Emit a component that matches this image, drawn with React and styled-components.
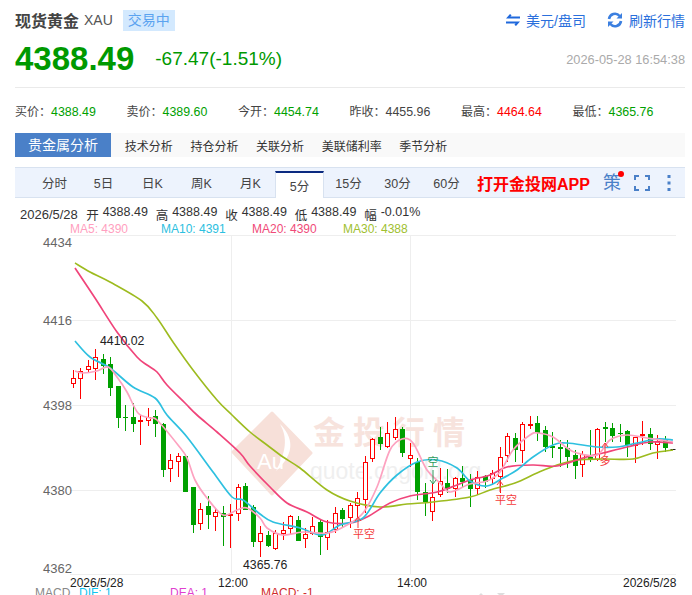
import React from 'react';
import styled, { createGlobalStyle } from 'styled-components';

const GlobalStyle = createGlobalStyle`
  html, body {
    margin: 0;
    padding: 0;
    height: 595px;
    overflow: hidden;
    background: #fff;
    font-family: "Liberation Sans", "Noto Sans CJK SC", sans-serif;
  }
`;

const Page = styled.div`
  width: 692px;
  height: 595px;
  overflow: hidden;
`;

const Head = styled.header`
  box-sizing: border-box;
  height: 88px;
  margin: 0 7px 0 15px;
  border-bottom: 1px solid #eaeaea;
`;

const TitleRow = styled.div`
  display: flex;
  align-items: center;
  height: 40px;
`;

const Title = styled.h1`
  margin: 0;
  font-size: 16px;
  font-weight: 700;
  color: #444;
`;

const Code = styled.span`
  margin-left: 5px;
  font-size: 14px;
  color: #555;
`;

const Badge = styled.span`
  margin-left: 10px;
  padding: 0 5px;
  height: 21px;
  line-height: 21px;
  font-size: 14px;
  color: #5ba3f0;
  background: #d3e9fe;
`;

const Actions = styled.div`
  display: flex;
  align-items: center;
  margin-left: auto;
`;

const Action = styled.a`
  display: flex;
  align-items: center;
  gap: ${({ $gap }) => $gap}px;
  margin-left: ${({ $offset }) => $offset || 0}px;
  font-size: 14px;
  color: #2a6fdc;
`;

const PriceRow = styled.div`
  display: flex;
  align-items: center;
  height: 38px;
`;

const Price = styled.strong`
  font-size: 33px;
  font-weight: 700;
  color: #009900;
`;

const Change = styled.span`
  margin-left: 21px;
  font-size: 19px;
  color: #009900;
`;

const Stamp = styled.time`
  margin-left: auto;
  font-size: 12.8px;
  color: #aaa;
`;

const Stats = styled.ul`
  display: grid;
  grid-template-columns: repeat(6, 111.5px);
  align-items: center;
  height: 44px;
  margin: 0 0 1px 15px;
  padding: 0;
  list-style: none;
  font-size: 12px;
  color: #444;
`;

const StatValue = styled.span`
  font-size: 12.4px;
  color: ${({ $color }) => $color};
`;

const AnalysisTabs = styled.nav`
  display: flex;
  align-items: center;
  height: 24px;
  margin: 0 7px 10px 15px;
  background: #f9f9f9;
  font-size: 12px;
  color: #333;
`;

const AnalysisActive = styled.span`
  width: 96px;
  margin-right: 5px;
  line-height: 24px;
  text-align: center;
  font-size: 14px;
  color: #fff;
  background: #4a80c8;
`;

const AnalysisTab = styled.span`
  padding: 0 8.8px;
`;

const PeriodBar = styled.div`
  box-sizing: border-box;
  display: flex;
  align-items: flex-end;
  height: 31px;
  margin: 0 7px 0 15px;
  padding-left: 15px;
  background: #edf3fd;
  border-top: 1px solid #d8e2f0;
  border-bottom: 1px solid #d8e2f0;
`;

const Period = styled.span`
  box-sizing: border-box;
  width: 49px;
  height: ${({ $active }) => ($active ? '27px' : '29px')};
  margin-bottom: ${({ $active }) => ($active ? '-1px' : '0')};
  line-height: ${({ $active }) => ($active ? '28px' : '33px')};
  text-align: center;
  font-size: 12.5px;
  color: #444;
  background: ${({ $active }) => ($active ? '#fff' : 'transparent')};
  border-top: ${({ $active }) => ($active ? '2px solid #0b2a80' : 'none')};
  border-left: ${({ $active }) => ($active ? '1px solid #d8e2f0' : 'none')};
  border-right: ${({ $active }) => ($active ? '1px solid #d8e2f0' : 'none')};
`;

const AppLink = styled.a`
  align-self: center;
  margin-left: 6px;
  font-size: 16px;
  font-weight: 700;
  color: #f00;
`;

const Strategy = styled.span`
  position: relative;
  align-self: center;
  margin-left: 13px;
  font-size: 18px;
  line-height: 20px;
  color: #4a80c8;
`;

const RedDot = styled.i`
  position: absolute;
  top: -2px;
  right: -3px;
  width: 6px;
  height: 6px;
  border-radius: 50%;
  background: #f00;
`;

const BarIcon = styled.svg`
  align-self: center;
  margin-left: ${({ $offset }) => $offset}px;
  flex: none;
`;

const InfoRow = styled.div`
  display: flex;
  align-items: center;
  gap: 7.8px;
  height: 15px;
  margin: 9px 0 0 20px;
  font-size: 12.5px;
  color: #333;
`;

const InfoDate = styled.span`
  margin-right: 0.5px;
  font-size: 13px;
`;

const InfoItem = styled.span`
  display: flex;
  gap: 4px;
`;

const Legend = styled.div`
  display: grid;
  grid-template-columns: repeat(4, 91px);
  align-items: center;
  height: 13px;
  margin-left: 70px;
  font-size: 12px;
`;

const LegendItem = styled.span`
  color: ${({ $color }) => $color};
`;

const Chart = styled.svg`
  display: block;
  width: 692px;
  height: 354px;
`;

const AxisLabel = styled.text`
  font-size: 13px;
  fill: #666;
`;

const TimeLabel = styled.text`
  font-size: 12px;
  fill: #222;
`;

const PeakLabel = styled.text`
  font-size: 12.3px;
  fill: #222;
`;

const Signal = styled.text`
  font-size: 11px;
  text-anchor: middle;
  fill: ${({ $color }) => $color};
`;

const BrandName = styled.text`
  font-size: 32px;
  font-weight: 700;
  letter-spacing: 8px;
  fill: #f7e3dd;
`;

const BrandUrl = styled.text`
  font-size: 23px;
  fill: #efefef;
`;

const BrandAu = styled.text`
  font-size: 22px;
  fill: #fff;
`;

const MacdRow = styled.div`
  display: flex;
  align-items: flex-start;
  height: 9px;
  margin-top: -3px;
  padding-left: 35px;
  font-size: 12px;
  line-height: 14px;
  overflow: hidden;
`;

const MacdItem = styled.span`
  width: ${({ $wide }) => ($wide ? 91 : 44)}px;
  color: ${({ $color }) => $color};
`;

const ZoomMarks = styled.svg`
  margin-left: 124px;
  margin-top: 7px;
  flex: none;
`;

const UP = '#f00';
const DOWN = '#00a000';

// [kind, bodyTop, bodyBottom, wickTop, wickBottom], in page pixels
const candles = [
  ['r', 378, 383, 370, 388], ['r', 371, 378, 368, 399], ['r', 366, 369, 360, 372], ['r', 357, 368, 349, 380],
  ['g', 359, 366, 354, 374], ['g', 364, 388, 357, 396], ['g', 386, 418, 386, 428], ['g', 417, 418, 405, 431],
  ['g', 417, 424, 403, 432], ['r', 420, 421, 415, 445], ['r', 417, 420, 408, 426], ['g', 416, 424, 410, 437],
  ['g', 424, 470, 423, 477], ['r', 460, 468, 454, 482], ['r', 456, 461, 453, 477], ['g', 456, 492, 454, 492],
  ['g', 487, 525, 487, 533], ['r', 509, 523, 503, 530], ['g', 506, 515, 496, 529], ['r', 512, 516, 508, 531],
  ['g', 513, 517, 506, 546], ['r', 514, 515, 504, 548], ['r', 487, 513, 484, 521], ['g', 486, 510, 483, 510],
  ['g', 507, 542, 505, 547], ['r', 533, 541, 526, 557], ['g', 535, 546, 531, 547], ['r', 533, 548, 530, 550],
  ['r', 530, 533, 522, 540], ['r', 516, 528, 515, 535], ['g', 520, 541, 516, 541], ['r', 534, 538, 528, 548],
  ['r', 526, 533, 517, 535], ['g', 522, 537, 520, 555], ['r', 532, 537, 520, 550], ['r', 513, 529, 507, 533],
  ['g', 510, 519, 508, 527], ['r', 505, 517, 503, 528], ['r', 498, 505, 492, 518], ['r', 462, 499, 456, 513],
  ['r', 439, 458, 438, 462], ['g', 437, 444, 427, 450], ['r', 433, 446, 422, 448], ['r', 429, 437, 417, 440],
  ['g', 429, 453, 427, 457], ['r', 455, 458, 443, 467], ['g', 462, 492, 458, 500], ['g', 492, 502, 483, 516],
  ['r', 497, 511, 483, 521], ['r', 481, 494, 468, 497], ['g', 483, 489, 469, 493], ['r', 478, 488, 477, 497],
  ['g', 478, 482, 466, 488], ['g', 480, 489, 474, 507], ['r', 477, 488, 471, 495], ['g', 476, 482, 475, 488],
  ['r', 473, 478, 470, 485], ['r', 457, 476, 447, 493], ['r', 436, 455, 433, 462], ['g', 438, 450, 433, 462],
  ['r', 424, 450, 422, 463], ['r', 424, 425, 416, 429], ['g', 423, 433, 416, 441], ['g', 430, 447, 426, 452],
  ['g', 446, 448, 432, 458], ['g', 447, 449, 440, 467], ['g', 448, 457, 440, 468], ['g', 455, 466, 450, 479],
  ['r', 454, 464, 451, 477], ['g', 457, 459, 430, 462], ['r', 429, 459, 428, 461], ['g', 427, 429, 422, 442],
  ['g', 428, 436, 423, 442], ['g', 433, 434, 424, 442], ['g', 431, 445, 430, 457], ['r', 437, 445, 437, 463],
  ['r', 434, 435, 421, 445], ['g', 434, 444, 428, 450], ['r', 441, 444, 435, 459], ['g', 439, 448, 436, 452],
  ['k', 449, 449, 449, 449],
];

const ma5 = [[75, 371], [83, 373], [97, 371], [108, 367], [117, 377], [127, 392], [138, 413], [150, 418], [157, 420], [178, 445], [187, 458], [195, 480], [207, 498], [223, 515], [237, 510], [247, 508], [260, 518], [267, 528], [283, 535], [303, 532], [328, 533], [347, 525], [363, 513], [377, 487], [390, 450], [402, 439], [413, 443], [427, 470], [440, 483], [450, 492], [470, 484], [487, 481], [500, 472], [513, 450], [530, 435], [538, 433], [553, 437], [567, 448], [577, 453], [597, 455], [610, 440], [627, 435], [647, 438], [673, 442]];
const ma10 = [[75, 341], [90, 357], [110, 368], [133, 387], [155, 398], [167, 415], [187, 437], [213, 472], [232, 497], [243, 500], [260, 514], [273, 522], [300, 528], [322, 535], [340, 525], [363, 518], [380, 493], [397, 475], [417, 462], [437, 460], [457, 468], [470, 481], [487, 486], [503, 478], [517, 470], [533, 457], [553, 445], [567, 443], [597, 447], [617, 447], [637, 443], [657, 439], [673, 440]];
const ma20 = [[75, 268], [95, 298], [117, 332], [137, 357], [147, 365], [157, 372], [167, 385], [185, 403], [197, 415], [217, 432], [240, 453], [250, 466], [270, 487], [287, 503], [307, 512], [327, 522], [350, 523], [367, 517], [390, 503], [410, 496], [437, 492], [457, 485], [470, 480], [490, 475], [507, 467], [533, 465], [557, 466], [583, 458], [603, 453], [627, 447], [650, 442], [673, 443]];
const ma30 = [[75, 263], [90, 272], [110, 282], [142, 301], [157, 318], [173, 342], [193, 370], [217, 400], [232, 415], [250, 432], [267, 445], [283, 457], [300, 468], [327, 490], [350, 501], [380, 507], [407, 504], [433, 502], [470, 497], [490, 490], [515, 483], [537, 473], [557, 465], [577, 460], [603, 459], [633, 459], [653, 453], [673, 450]];

const smooth = (pts) =>
  pts.reduce((d, p, i) => {
    if (i === 0) return `M${p[0]} ${p[1]}`;
    const a = pts[i - 2] || pts[i - 1];
    const b = pts[i - 1];
    const c = pts[i + 1] || p;
    const c1 = [b[0] + (p[0] - a[0]) / 6, b[1] + (p[1] - a[1]) / 6];
    const c2 = [p[0] - (c[0] - b[0]) / 6, p[1] - (c[1] - b[1]) / 6];
    return `${d}C${c1[0]} ${c1[1]} ${c2[0]} ${c2[1]} ${p[0]} ${p[1]}`;
  }, '');

const Candle = ({ data, index }) => {
  const [kind, top, bottom, wickTop, wickBottom] = data;
  const x = Math.floor(73.3 + 7.49 * index) + 0.5;
  if (kind === 'k') return <line x1={x - 2} x2={x + 3} y1={top + 0.5} y2={top + 0.5} stroke="#222" />;
  const color = kind === 'r' ? UP : DOWN;
  return (
    <g>
      <line x1={x} x2={x} y1={wickTop} y2={wickBottom} stroke={color} />
      {kind === 'r' ? (
        <rect x={x - 2} y={top + 0.5} width={4} height={Math.max(bottom - top, 1)} fill="#fff" stroke={color} />
      ) : (
        <rect x={x - 2.5} y={top} width={5} height={Math.max(bottom - top, 1)} fill={color} />
      )}
    </g>
  );
};

const stats = [
  ['买价：', '4388.49', '#00a000'],
  ['卖价：', '4389.60', '#00a000'],
  ['今开：', '4454.74', '#00a000'],
  ['昨收：', '4455.96', '#444'],
  ['最高：', '4464.64', '#f00'],
  ['最低：', '4365.76', '#00a000'],
];

const info = [
  ['开', '4388.49'],
  ['高', '4388.49'],
  ['收', '4388.49'],
  ['低', '4388.49'],
  ['幅', '-0.01%'],
];

const periods = ['分时', '5日', '日K', '周K', '月K', '5分', '15分', '30分', '60分'];

const SIGNAL_RED = '#f43c3c';
const SIGNAL_GREEN = '#2e9a5a';

const UpArrow = ({ x, y1, y2, color }) => (
  <path d={`M${x} ${y2}V${y1}M${x - 3} ${y1 + 4}L${x} ${y1}L${x + 3} ${y1 + 4}`} fill="none" stroke={color} />
);

const DownArrow = ({ x, y1, y2, color }) => (
  <path d={`M${x} ${y1}V${y2}M${x - 3} ${y2 - 4}L${x} ${y2}L${x + 3} ${y2 - 4}`} fill="none" stroke={color} />
);

const App = () => (
  <Page>
    <GlobalStyle />
    <Head>
      <TitleRow>
        <Title>现货黄金</Title>
        <Code>XAU</Code>
        <Badge>交易中</Badge>
        <Actions>
          <Action $gap={6}>
            <svg width="14" height="12" viewBox="0 0 14 12" fill="#1f68dc">
              <path d="M4 0L0 4.4H14V2.6H4.4L5.6 1.2Z" />
              <path d="M10 12L14 7.6H0V9.4H9.6L8.4 10.8Z" />
            </svg>
            美元/盘司
          </Action>
          <Action $gap={6} $offset={21}>
            <svg width="16" height="16" viewBox="0 0 16 16" fill="none" stroke="#3b7fe0" strokeWidth="2.6">
              <path d="M2 7A6 6 0 0 1 12.6 4" />
              <path d="M14 9A6 6 0 0 1 3.4 12" />
              <path d="M15 1V6.5H9.5Z" fill="#3b7fe0" strokeWidth="0" />
              <path d="M1 15V9.5H6.5Z" fill="#3b7fe0" strokeWidth="0" />
            </svg>
            刷新行情
          </Action>
        </Actions>
      </TitleRow>
      <PriceRow>
        <Price>4388.49</Price>
        <Change>-67.47(-1.51%)</Change>
        <Stamp>2026-05-28 16:54:38</Stamp>
      </PriceRow>
    </Head>

    <Stats>
      {stats.map(([label, value, color]) => (
        <li key={label}>
          {label}
          <StatValue $color={color}>{value}</StatValue>
        </li>
      ))}
    </Stats>

    <AnalysisTabs>
      <AnalysisActive>贵金属分析</AnalysisActive>
      <AnalysisTab>技术分析</AnalysisTab>
      <AnalysisTab>持仓分析</AnalysisTab>
      <AnalysisTab>关联分析</AnalysisTab>
      <AnalysisTab>美联储利率</AnalysisTab>
      <AnalysisTab>季节分析</AnalysisTab>
    </AnalysisTabs>

    <PeriodBar>
      {periods.map((p) => (
        <Period key={p} $active={p === '5分'}>
          {p}
        </Period>
      ))}
      <AppLink>打开金投网APP</AppLink>
      <Strategy>
        策
        <RedDot />
      </Strategy>
      <BarIcon $offset={13} width="16" height="16" viewBox="0 0 16 16" fill="none" stroke="#4a80c8" strokeWidth="2">
        <path d="M1 5V1H5M11 1H15V5M15 11V15H11M5 15H1V11" />
      </BarIcon>
      <BarIcon $offset={17} width="4" height="16" viewBox="0 0 4 16" fill="#4a80c8">
        <rect x="0.5" y="0" width="3" height="3" />
        <rect x="0.5" y="6.5" width="3" height="3" />
        <rect x="0.5" y="13" width="3" height="3" />
      </BarIcon>
    </PeriodBar>

    <InfoRow>
      <InfoDate>2026/5/28</InfoDate>
      {info.map(([label, value]) => (
        <InfoItem key={label}>
          <span>{label}</span>
          <span>{value}</span>
        </InfoItem>
      ))}
    </InfoRow>

    <Legend>
      <LegendItem $color="#ff9fc0">MA5: 4390</LegendItem>
      <LegendItem $color="#2cc0e0">MA10: 4391</LegendItem>
      <LegendItem $color="#f04a78">MA20: 4390</LegendItem>
      <LegendItem $color="#a0c030">MA30: 4388</LegendItem>
    </Legend>

    <Chart viewBox="0 235 692 354">
      {[235, 320, 405, 490, 574].map((y) => (
        <line key={y} x1="70" x2="676" y1={y + 0.5} y2={y + 0.5} stroke="#eee" />
      ))}
      {[231.5, 410.5].map((x) => (
        <line key={x} x1={x} x2={x} y1="235" y2="574" stroke="#eee" />
      ))}

      <path
        d="M272 413L311 453L272 494L233 452Z"
        fill="#f7e0d9"
        stroke="#f7e0d9"
        strokeWidth="3"
        strokeLinejoin="round"
      />
      <path d="M280 424C292 436 297 452 276 471C286 452 288 438 280 424Z" fill="#fff" />
      <BrandAu x="257" y="469">Au</BrandAu>
      <BrandName x="313" y="444">金投行情</BrandName>
      <BrandUrl x="310" y="479">quote.cngold.org</BrandUrl>

      {candles.map((c, i) => (
        <Candle key={i} data={c} index={i} />
      ))}

      <path d={smooth(ma30)} fill="none" stroke="#9dbb1f" strokeWidth="1.6" />
      <path d={smooth(ma20)} fill="none" stroke="#f0447a" strokeWidth="1.7" />
      <path d={smooth(ma10)} fill="none" stroke="#2ec0e0" strokeWidth="1.7" />
      <path d={smooth(ma5)} fill="none" stroke="#fda2c0" strokeWidth="1.7" />

      <AxisLabel x="43" y="247">4434</AxisLabel>
      <AxisLabel x="43" y="325">4416</AxisLabel>
      <AxisLabel x="43" y="410">4398</AxisLabel>
      <AxisLabel x="43" y="495">4380</AxisLabel>
      <AxisLabel x="43" y="573">4362</AxisLabel>

      <PeakLabel x="100" y="345">4410.02</PeakLabel>
      <PeakLabel x="243" y="569">4365.76</PeakLabel>

      <UpArrow x={358} y1={517} y2={528} color={SIGNAL_RED} />
      <Signal x="364" y="538" $color={SIGNAL_RED}>平空</Signal>
      <UpArrow x={500} y1={481} y2={492} color={SIGNAL_RED} />
      <Signal x="506" y="504" $color={SIGNAL_RED}>平空</Signal>
      <UpArrow x={605} y1={443} y2={455} color={SIGNAL_RED} />
      <Signal x="605" y="465" $color={SIGNAL_RED}>多</Signal>
      <Signal x="433" y="466" $color={SIGNAL_GREEN}>空</Signal>
      <DownArrow x={433} y1={470} y2={484} color={SIGNAL_GREEN} />

      <TimeLabel x="70" y="587">2026/5/28</TimeLabel>
      <TimeLabel x="218" y="587">12:00</TimeLabel>
      <TimeLabel x="397" y="587">14:00</TimeLabel>
      <TimeLabel x="623" y="587">2026/5/28</TimeLabel>
    </Chart>

    <MacdRow>
      <MacdItem $color="#888">MACD</MacdItem>
      <MacdItem $wide $color="#10c4f0">DIF: 1</MacdItem>
      <MacdItem $wide $color="#e040d0">DEA: 1</MacdItem>
      <MacdItem $wide $color="#d02a2a">MACD: -1</MacdItem>
      <ZoomMarks width="30" height="4" viewBox="0 0 30 4" fill="#ddd">
        <path d="M5 0L9 4H1Z" />
        <path d="M21 0H29L25 4Z" />
      </ZoomMarks>
    </MacdRow>
  </Page>
);

export default App;
